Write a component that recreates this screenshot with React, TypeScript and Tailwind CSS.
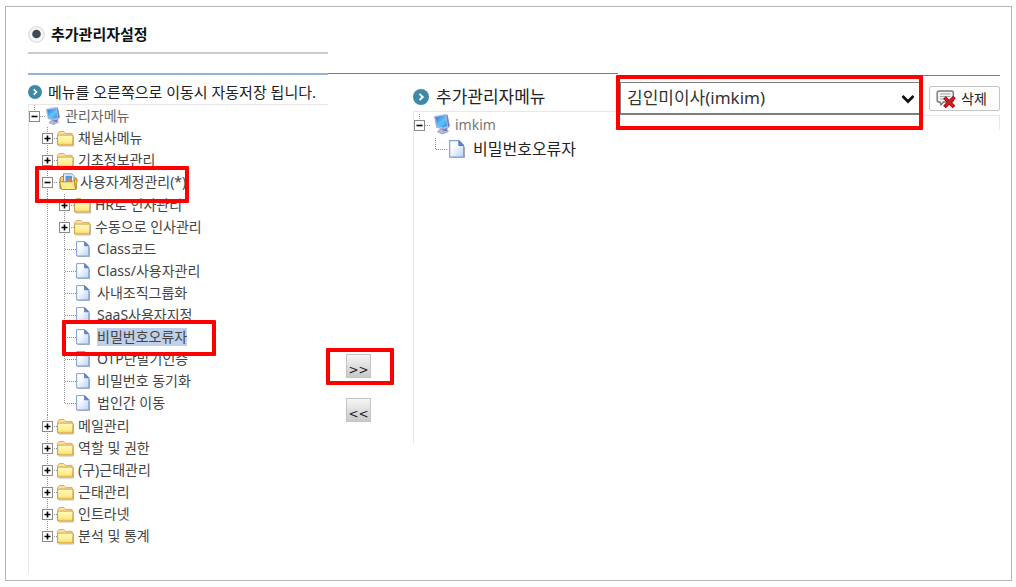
import { useState, type ReactNode } from 'react';

function RadioBullet() {
  return (
    <svg width="17" height="17" viewBox="0 0 17 17" className="shrink-0" aria-hidden="true">
      <circle cx="8.5" cy="8.5" r="7.8" fill="#f6f6f6" stroke="#d4d4d4" />
      <circle cx="8.5" cy="8" r="4.3" fill="#3f4a58" />
    </svg>
  );
}

function ArrowBullet({ size }: { size: number }) {
  return (
    <svg width={size} height={size} viewBox="0 0 14 14" className="shrink-0" aria-hidden="true">
      <circle cx="7" cy="7" r="7" fill="#3d8aa8" />
      <path d="M5.7 4.3 8.5 7 5.7 9.7" fill="none" stroke="#fff" strokeWidth="1.7" />
    </svg>
  );
}

function MonitorIcon({ size }: { size: number }) {
  return (
    <svg width={size} height={(size * 18) / 14} viewBox="0 0 14 18" className="shrink-0" aria-hidden="true">
      <defs>
        <linearGradient id="screen" x1="0" y1="0" x2="1" y2="1">
          <stop offset="0" stopColor="#2673dc" />
          <stop offset="0.55" stopColor="#62c4fc" />
          <stop offset="1" stopColor="#2f8cec" />
        </linearGradient>
      </defs>
      <path d="M3 15.600 6.500 12.500 11.500 13.500 12.500 15.300 7.500 17.500z" fill="#b9bbdc" stroke="#8286b4" strokeWidth="0.600" />
      <path d="M6.500 11.500 12 10.500 11 15 7.500 14.500z" fill="#7075ae" />
      <path d="M.4 2.200 10.400.4 11.700.9 13.600 10.300 12.300 12.300 8.500 13.300 2.200 11.800z" fill="#b8bfe2" stroke="#8c94c4" strokeWidth="0.500" />
      <path d="M1.200 2.900 10 1.400 11.600 10.500 8.200 11.800 2.800 10.900z" fill="url(#screen)" />
      <path d="M10.700.9 11.700 1 13.500 10.300 12.400 11.600z" fill="#777eb8" />
    </svg>
  );
}

function FolderIcon() {
  return (
    <svg width="17" height="17" viewBox="0 0 17 17" className="shrink-0" aria-hidden="true">
      <defs>
        <linearGradient id="folder" x1="0" y1="0" x2="0" y2="1">
          <stop offset="0" stopColor="#fffbc0" />
          <stop offset="0.7" stopColor="#ffec8c" />
          <stop offset="1" stopColor="#f8cf58" />
        </linearGradient>
      </defs>
      <path d="M1.5 16h15V6" fill="none" stroke="#b5b5b5" strokeWidth="0.9" />
      <path d="M.6 14.5V3.4L2.2 1.5h4.6l1.7 1.900h6.600v2.500" fill="#f8dfa0" stroke="#d3a95a" strokeWidth="0.900" />
      <path d="M.6 15V6l.8-.900h14.700L15.600 15z" fill="url(#folder)" stroke="#cc9a3c" strokeWidth="0.900" />
    </svg>
  );
}

function OpenFolderIcon() {
  return (
    <svg width="19" height="18" viewBox="0 0 19 18" className="shrink-0" aria-hidden="true">
      <path d="M1 15.500V5l1.500-1.500h3l2 1.500h9.800v10.500z" fill="#f3cf72" stroke="#b9822a" />
      <path d="M4.500.8h8.500l2 2V12H4.500z" fill="#eef4fd" stroke="#7795c4" />
      <path d="M6.500 2.800h6.500v6.400H6.500z" fill="#4c9be0" />
      <path d="M8.500 5.200h3.300v4H8.500z" fill="#e9785a" />
      <path d="M.6 8.800h12.600l2-1.800 1.500 9.500H2.600z" fill="#ffec8c" stroke="#c08c30" />
      <path d="M16.700 16.500 18.300 6.800l-2.900.3z" fill="#f5cd55" stroke="#b9822a" strokeWidth="0.700" />
    </svg>
  );
}

function FileIcon({ size }: { size: number }) {
  return (
    <svg width={size} height={(size * 16) / 14} viewBox="0 0 14 16" className="shrink-0" aria-hidden="true">
      <defs>
        <linearGradient id="sheet" x1="0" y1="0" x2="1" y2="1">
          <stop offset="0.3" stopColor="#fff" />
          <stop offset="1" stopColor="#b9d2f6" />
        </linearGradient>
      </defs>
      <path d="M1.5 15.6h12V6" fill="none" stroke="#999" strokeWidth="0.8" />
      <path d="M.6.6h8.2L12.8 4.6V15H.6z" fill="url(#sheet)" stroke="#7f9fd6" strokeWidth="1" />
      <path d="M8.6.8v4h4z" fill="#5f8ed2" stroke="#4573bb" strokeWidth="0.8" />
    </svg>
  );
}

function DeleteIcon() {
  return (
    <svg width="20" height="20" viewBox="0 0 20 20" className="shrink-0" aria-hidden="true">
      <path
        d="M3 2h12.500q1.800 0 1.800 1.800v7.400q0 1.800-1.800 1.800H7.500l-2.500 2.800-1-2.800H3q-1.800 0-1.800-1.800V3.800Q1.200 2 3 2z"
        fill="#f4f4f4"
        stroke="#7d7d7d"
        strokeWidth="1.500"
      />
      <path d="M4 5h10.500M4 7.500h10.500M4 10h5" stroke="#a5a5a5" strokeWidth="1" />
      <path d="m8.500 8.500 9.500 9.500M18.500 8 8.500 18" stroke="#7c0d10" strokeWidth="3.800" />
      <path d="m9 9 8.500 8.500M18 8.500 9 17.500" stroke="#e0141a" strokeWidth="2.600" />
    </svg>
  );
}

type BranchKind = 'plus' | 'minus' | 'leaf';

function Branch({ kind, last = false }: { kind: BranchKind; last?: boolean }) {
  const width = kind === 'leaf' ? 17 : 15;
  return (
    <svg width={width} height="22" viewBox={`0 0 ${width} 22`} className="shrink-0" aria-hidden="true">
      <path d={last ? 'M5.500 0V12' : 'M5.500 0V22'} stroke="#8f8f8f" strokeDasharray="1 1" />
      <path d={`M6 11.500H${width}`} stroke="#8f8f8f" strokeDasharray="1 1" />
      {kind !== 'leaf' && (
        <>
          <rect x="0.500" y="6.500" width="10" height="10" fill="#fff" stroke="#8a8a8a" />
          <path d={kind === 'plus' ? 'M2.500 11.500h6M5.500 8.500v6' : 'M2.500 11.500h6'} stroke="#000" strokeWidth="1.600" />
        </>
      )}
    </svg>
  );
}

function RootBranch() {
  return (
    <svg width="17" height="22" viewBox="0 0 17 22" className="shrink-0" aria-hidden="true">
      <path d="M5.500 0V6M11 11.500H17" stroke="#8f8f8f" strokeDasharray="1 1" />
      <rect x="0.500" y="6.500" width="10" height="10" fill="#fff" stroke="#8a8a8a" />
      <path d="M2.500 11.500h6" stroke="#000" strokeWidth="1.600" />
    </svg>
  );
}

function Highlight({ className }: { className: string }) {
  return <span className={`pointer-events-none absolute z-10 rounded-[1px] border-4 border-[#fe0000] ${className}`} />;
}

const accountItems: { label: string; folder?: boolean }[] = [
  { label: 'HR로 인사관리', folder: true },
  { label: '수동으로 인사관리', folder: true },
  { label: 'Class코드' },
  { label: 'Class/사용자관리' },
  { label: '사내조직그룹화' },
  { label: 'SaaS사용자지정' },
  { label: '비밀번호오류자' },
  { label: 'OTP단말기인증' },
  { label: '비밀번호 동기화' },
  { label: '법인간 이동' },
];

const trailingFolders = ['메일관리', '역할 및 권한', '(구)근태관리', '근태관리', '인트라넷', '분석 및 통계'];

function FolderRow({ label, last }: { label: string; last?: boolean }) {
  return (
    <li className="flex h-[22px] items-center">
      <Branch kind="plus" last={last} />
      <FolderIcon />
      <span className="ml-1">{label}</span>
    </li>
  );
}

function MoveButton({ label, children }: { label: string; children: ReactNode }) {
  return (
    <button
      type="button"
      aria-label={label}
      className="flex h-6 w-[25px] items-end justify-center border border-[#c4c4c4] bg-linear-to-b from-[#f6f6f6] to-[#c9c9c9] font-['DejaVu_Sans',sans-serif] text-xs leading-[14px] text-[#222]"
    >
      {children}
    </button>
  );
}

function MenuTree() {
  const [selected, setSelected] = useState('비밀번호오류자');
  return (
    <div className="border-t border-l border-[#e8e8e8] pb-[26px] text-sm leading-[18px] whitespace-nowrap text-[#444]">
      <div className="flex h-[22px] items-center text-[#666]">
        <RootBranch />
        <MonitorIcon size={14} />
        <span className="ml-[5px]">관리자메뉴</span>
      </div>
      <ul className="pl-[13px]">
        <FolderRow label="채널사메뉴" />
        <FolderRow label="기초정보관리" />
        <li>
          <div className="relative flex h-[22px] items-center">
            <Branch kind="minus" />
            <span className="pl-0.5">
              <OpenFolderIcon />
            </span>
            <span className="ml-0.5">사용자계정관리(*)</span>
            <Highlight className="-top-[5px] -left-[7px] h-[37px] w-[154px]" />
          </div>
          <ul className="ml-[5px] border-l border-dotted border-[#8f8f8f] py-px pl-[11px]">
            {accountItems.map((item, i) =>
              item.folder ? (
                <FolderRow key={item.label} label={item.label} />
              ) : (
                <li key={item.label} className="relative flex h-[22px] items-center">
                  <Branch kind="leaf" last={i === accountItems.length - 1} />
                  <FileIcon size={14} />
                  <button
                    type="button"
                    onClick={() => setSelected(item.label)}
                    className={selected === item.label ? 'ml-[7px] bg-[#bfd0ea]' : 'ml-[7px]'}
                  >
                    {item.label}
                  </button>
                  {item.label === '비밀번호오류자' && (
                    <Highlight className="-top-[6px] left-[3px] h-9 w-[154px]" />
                  )}
                </li>
              ),
            )}
          </ul>
        </li>
        {trailingFolders.map((label, i) => (
          <FolderRow key={label} label={label} last={i === trailingFolders.length - 1} />
        ))}
      </ul>
    </div>
  );
}

export default function App() {
  return (
    <div className="bg-white pt-1.5 pr-1 pb-1.5 pl-[5px] font-['Noto_Sans','Noto_Sans_CJK_KR',sans-serif] text-[#222]">
      <main className="border border-[#b4b4b4] pr-[11px] pb-[7px] pl-[22px]">
        <header className="w-[300px]">
          <h1 className="flex h-[45px] items-center gap-1.5 pt-[9px] text-[15px] leading-5 font-bold text-[#111]">
            <RadioBullet />
            추가관리자설정
          </h1>
          <div className="h-0.5 bg-[#cbcbcb]" />
        </header>

        <div className="mt-[19px] flex items-start">
          <section className="w-[300px] shrink-0 border-t-2 border-[#94b3d3]">
            <h2 className="flex h-[29px] items-center gap-1.5 pt-1 text-[15px] leading-5 whitespace-nowrap">
              <ArrowBullet size={14} />
              메뉴를 오른쪽으로 이동시 자동저장 됩니다.
            </h2>
            <MenuTree />
          </section>

          <div className="flex w-[85px] shrink-0 flex-col items-start gap-5 border-t border-[#4f86c0] pt-[280px] pl-[18px]">
            <div className="relative">
              <MoveButton label="오른쪽으로 이동">&gt;&gt;</MoveButton>
              <Highlight className="-top-1.5 -left-5 h-[37px] w-[68px]" />
            </div>
            <MoveButton label="왼쪽으로 이동">&lt;&lt;</MoveButton>
          </div>

          <section className="w-[205px] shrink-0 border-t border-[#4f86c0]">
            <h2 className="flex h-[37px] items-center gap-[7px] pt-[9px] text-[17px] leading-6 whitespace-nowrap">
              <ArrowBullet size={16} />
              추가관리자메뉴
            </h2>
            <div className="min-h-[333px] border-t border-l border-[#e8e8e8] leading-[22px] whitespace-nowrap">
              <div className="flex h-[25px] items-center text-sm text-[#777]">
                <RootBranch />
                <span className="pl-[3px]">
                  <MonitorIcon size={16} />
                </span>
                <span className="ml-[5px]">imkim</span>
              </div>
              <ul className="pl-4 text-base">
                <li className="flex h-6 items-center">
                  <Branch kind="leaf" last />
                  <span className="pl-0.5">
                    <FileIcon size={16} />
                  </span>
                  <span className="ml-2">비밀번호오류자</span>
                </li>
              </ul>
            </div>
          </section>

          <section className="mt-0.5 min-w-0 flex-1 border-t border-[#4f86c0] pt-1.5">
            <div className="flex items-center gap-2.5 pl-0.5">
              <div className="relative min-w-0 flex-1">
                <select
                  aria-label="추가관리자"
                  className="block h-[33px] w-full appearance-none border-t border-b-2 border-l border-[#7d7d7d] bg-white pr-8 pl-1.5 text-[17px] text-[#333]"
                >
                  <option>김인미이사(imkim)</option>
                </select>
                <svg
                  width="14"
                  height="10"
                  viewBox="0 0 14 10"
                  className="pointer-events-none absolute top-3 right-1"
                  aria-hidden="true"
                >
                  <path d="M1.500 2 7 7.500 12.500 2" fill="none" stroke="#111" strokeWidth="2.800" />
                </svg>
                <Highlight className="-top-[7px] -right-1 -bottom-[15px] -left-1" />
              </div>
              <button
                type="button"
                className="flex h-[25px] w-[71px] shrink-0 items-center gap-[5px] rounded-[2px] border border-[#c6c6c6] bg-[#fdfdfd] pl-1.5 text-sm leading-5"
              >
                <DeleteIcon />
                삭제
              </button>
            </div>
            <div className="ml-auto h-[15px] w-[77px] border-t border-r border-[#e8e8e8]" />
          </section>
        </div>
      </main>
    </div>
  );
}
